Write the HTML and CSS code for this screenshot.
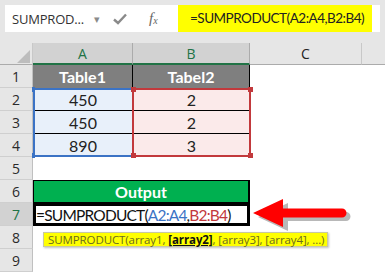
FILE: index.html
```html
<!DOCTYPE html>
<html lang="en">
<head>
<meta charset="UTF-8" />
<title>SUMPRODUCT</title>
<link rel="stylesheet" href="styles.css">
</head>
<body>
  <div class="topbar">
    <div class="namebox">
      <span class="name">SUMPROD...</span>
      <span class="drop">&#9662;</span>
      <svg class="check" width="14" height="12" viewBox="0 0 14 12"><path d="M1 6.5 L5 10 L13 1.5" fill="none" stroke="#8a8a8a" stroke-width="2.4"/></svg>
      <span class="fx">f<sub>x</sub></span>
    </div>
    <div class="fbar">=SUMPRODUCT(A2:A4,B2:B4)</div>
    <div class="fbar-end"></div>
  </div>

  <div class="sheet">
    <div class="corner"><svg width="26" height="16" viewBox="0 0 26 16"><path d="M24 2 L24 15 L11 15 Z" fill="#bdbdbd"/></svg></div>
    <div class="colhead active">A</div>
    <div class="colhead active">B</div>
    <div class="colhead">C</div>
    <div class="colhead last"></div>

    <div class="rowhead">1</div>
    <div class="cell title">Table1</div>
    <div class="cell title">Tabel2</div>
    <div class="cell"></div><div class="cell"></div>

    <div class="rowhead">2</div>
    <div class="cell val a">450</div>
    <div class="cell val b">2</div>
    <div class="cell"></div><div class="cell"></div>

    <div class="rowhead">3</div>
    <div class="cell val a">450</div>
    <div class="cell val b">2</div>
    <div class="cell"></div><div class="cell"></div>

    <div class="rowhead">4</div>
    <div class="cell val a last-row">890</div>
    <div class="cell val b last-row">3</div>
    <div class="cell"></div><div class="cell"></div>

    <div class="rowhead">5</div>
    <div class="cell"></div><div class="cell"></div><div class="cell"></div><div class="cell"></div>

    <div class="rowhead">6</div>
    <div class="cell output">Output</div>
    <div class="cell"></div><div class="cell"></div>

    <div class="rowhead selected">7</div>
    <div class="cell formula">=SUMPRODUCT(<span class="ref-a">A2:A4</span>,<span class="ref-b">B2:B4</span>)</div>
    <div class="cell"></div><div class="cell"></div>

    <div class="rowhead">8</div>
    <div class="cell"></div><div class="cell"></div><div class="cell"></div><div class="cell"></div>

    <div class="rowhead">9</div>
    <div class="cell"></div><div class="cell"></div><div class="cell"></div><div class="cell"></div>

    <div class="range range-a"><i class="h tl"></i><i class="h bl"></i></div>
    <div class="range range-b"><i class="h tl"></i><i class="h tr"></i><i class="h bl"></i><i class="h br"></i></div>

    <div class="tooltip">SUMPRODUCT(array1, <b>[array2]</b>, [array3], [array4], ...)</div>

    <svg class="arrow" width="104" height="36" viewBox="0 0 104 36">
      <path d="M5 17 L35 3 L35 12 L93 12 A4.5 4.5 0 0 1 93 21 L35 21 L35 31 Z" fill="#b8b8b8" transform="translate(3 3)"/>
      <path d="M3 16 L33 2 L33 11.5 L92 11.5 A4.5 4.5 0 0 1 92 20.5 L33 20.5 L33 30 Z" fill="#ff0000"/>
    </svg>
  </div>
</body>
</html>
```

FILE: styles.css
```css
* {
  box-sizing: border-box;
}
body {
  margin: 0;
  width: 385px;
  height: 276px;
  overflow: hidden;
  background: #fff;
  font-family: 'Open Sans', 'Noto Sans', sans-serif;
}

/* formula bar */
.topbar {
  background: #e6e6e6;
  display: flex;
  padding: 5px 0 11px 5px;
  height: 43px;
}
.namebox {
  width: 173px;
  height: 27px;
  background: #fff;
  display: flex;
  align-items: center;
  padding-left: 7px;
  color: #333;
}
.name {
  font-size: 13px;
  width: 80px;
  letter-spacing: -0.2px;
  white-space: nowrap;
}
.drop {
  color: #8a8a8a;
  font-size: 11px;
  width: 21px;
  padding-left: 2px;
}
.check {
  display: block;
}
.fx {
  margin-left: 22px;
  font-family: 'Liberation Serif', serif;
  font-style: italic;
  font-size: 15px;
  color: #666;
}
.fx sub {
  font-size: 10px;
  vertical-align: -1px;
}
.fbar {
  width: 194px;
  height: 27px;
  background: #ffff00;
  font-family: Lato, sans-serif;
  font-size: 13.5px;
  letter-spacing: -0.5px;
  color: #222;
  line-height: 27px;
  padding-left: 12px;
  white-space: nowrap;
  overflow: hidden;
}
.fbar-end {
  width: 8px;
  height: 27px;
  background: #fff;
}

/* sheet grid */
.sheet {
  position: relative;
  display: grid;
  grid-template-columns: 33px 100px 117px 112px 1fr;
  grid-template-rows: 22px repeat(9, 23px);
  font-family: Lato, 'Liberation Sans', sans-serif;
}
.corner {
  background: #e6e6e6;
  border-right: 1px solid #c8c8c8;
  border-bottom: 1px solid #ababab;
  display: flex;
  align-items: flex-end;
  justify-content: flex-end;
}
.corner svg {
  display: block;
}
.colhead {
  background: #e6e6e6;
  border-right: 1px solid #c8c8c8;
  border-bottom: 1px solid #ababab;
  text-align: center;
  font-family: 'Open Sans', sans-serif;
  font-size: 14px;
  line-height: 21px;
  color: #222;
}
.colhead.active {
  background: #d2d2d2;
  color: #217346;
  border-bottom: 2px solid #217346;
  border-right-color: #ababab;
}
.colhead.last {
  border-right: none;
}
.rowhead {
  background: #e6e6e6;
  border-right: 1px solid #c0c0c0;
  border-bottom: 1px solid #cfcfcf;
  text-align: center;
  font-family: 'Open Sans', sans-serif;
  font-size: 14px;
  line-height: 23px;
  color: #2a2a2a;
}
.rowhead.selected {
  background: #d2d2d2;
  color: #217346;
}
.cell {
  background: #fff;
  text-align: center;
  font-size: 16px;
  line-height: 23px;
  white-space: nowrap;
}
.cell.title {
  background: #7f7f7f;
  color: #fff;
  font-weight: bold;
  font-size: 16px;
  border-right: 1px solid #000;
}
.cell.val {
  border-bottom: 1px solid #000;
  color: #222;
}
.cell.val.last-row {
  border-bottom: none;
}
.cell.a {
  background: #e8f0fa;
}
.cell.b {
  background: #fbeaea;
}
.cell.output {
  grid-column: span 2;
  background: #00b050;
  color: #fff;
  font-weight: bold;
  border: 1px solid #000;
  border-right-width: 2px;
  line-height: 21px;
}
.cell.formula {
  grid-column: span 2;
  border: 3px solid #000;
  text-align: left;
  font-size: 15.5px;
  letter-spacing: -0.8px;
  line-height: 18px;
  overflow: visible;
  color: #111;
}
.ref-a {
  color: #3b73c5;
}
.ref-b {
  color: #c2393c;
}

/* selection ranges drawn over the cells */
.range {
  position: absolute;
  top: 45px;
  height: 69px;
  pointer-events: none;
}
.range-a {
  left: 33px;
  width: 100px;
  border: 2px solid #3b73c5;
  border-right: none;
}
.range-b {
  left: 132px;
  width: 119px;
  border: 2px solid #c2393c;
}
.h {
  position: absolute;
  width: 5px;
  height: 5px;
  background: #c2393c;
}
.range-a .h {
  width: 3px;
  background: #3b73c5;
}
.tl { left: -3px; top: -3px; }
.tr { right: -4px; top: -3px; }
.bl { left: -3px; bottom: -3px; }
.br { right: -4px; bottom: -3px; }

/* overlays */
.tooltip {
  position: absolute;
  left: 43px;
  top: 189px;
  width: 285px;
  height: 15px;
  background: #ffff00;
  border: 1px solid #c8c8a0;
  box-shadow: 1px 1px 2px rgba(0,0,0,0.25);
  font-family: 'Open Sans', sans-serif;
  font-size: 11.5px;
  line-height: 13px;
  color: #6b6b1e;
  padding-left: 4px;
  white-space: nowrap;
  letter-spacing: -0.1px;
}
.tooltip b {
  color: #111;
  text-decoration: underline;
}
.arrow {
  position: absolute;
  left: 250px;
  top: 154px;
}
```
